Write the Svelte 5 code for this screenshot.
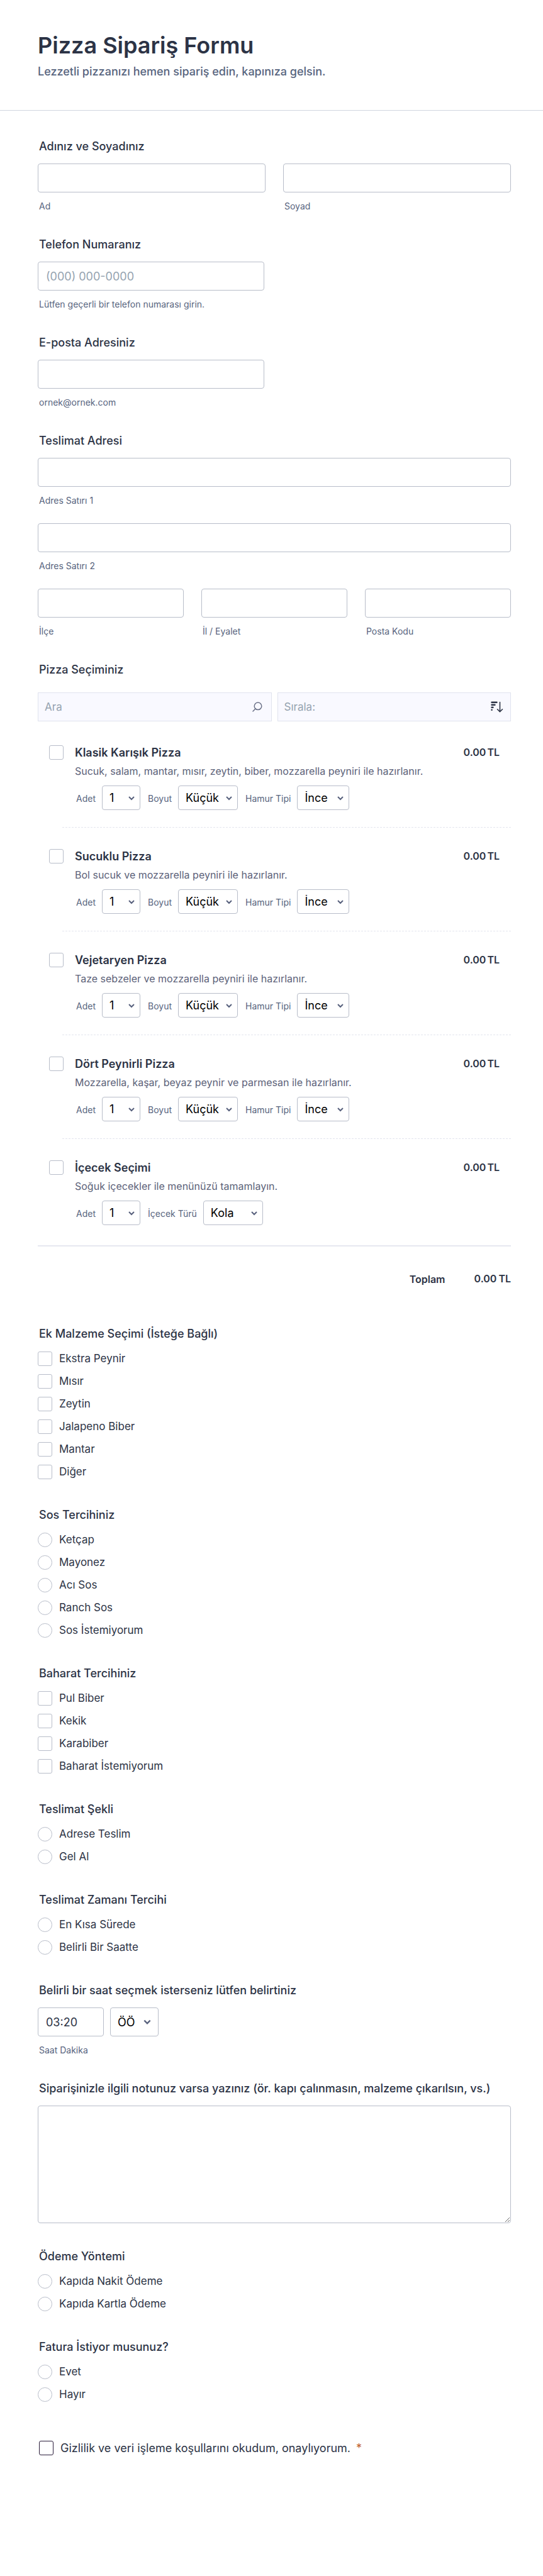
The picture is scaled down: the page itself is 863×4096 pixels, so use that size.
<script lang="ts">
	type Field = { label: string; options: string[]; width: 'narrow' | 'medium' | 'wide' };

	const quantity: Field = { label: 'Adet', options: ['1', '2', '3', '4', '5'], width: 'narrow' };
	const size: Field = { label: 'Boyut', options: ['Küçük', 'Orta', 'Büyük'], width: 'wide' };
	const dough: Field = { label: 'Hamur Tipi', options: ['İnce', 'Kalın'], width: 'medium' };
	const drink: Field = { label: 'İçecek Türü', options: ['Kola', 'Ayran', 'Su'], width: 'wide' };

	const products = [
		{ name: 'Klasik Karışık Pizza', text: 'Sucuk, salam, mantar, mısır, zeytin, biber, mozzarella peyniri ile hazırlanır.', fields: [quantity, size, dough] },
		{ name: 'Sucuklu Pizza', text: 'Bol sucuk ve mozzarella peyniri ile hazırlanır.', fields: [quantity, size, dough] },
		{ name: 'Vejetaryen Pizza', text: 'Taze sebzeler ve mozzarella peyniri ile hazırlanır.', fields: [quantity, size, dough] },
		{ name: 'Dört Peynirli Pizza', text: 'Mozzarella, kaşar, beyaz peynir ve parmesan ile hazırlanır.', fields: [quantity, size, dough] },
		{ name: 'İçecek Seçimi', text: 'Soğuk içecekler ile menünüzü tamamlayın.', fields: [quantity, drink] }
	];

	const choices = [
		{ id: 'extra', type: 'checkbox', title: 'Ek Malzeme Seçimi (İsteğe Bağlı)', items: ['Ekstra Peynir', 'Mısır', 'Zeytin', 'Jalapeno Biber', 'Mantar', 'Diğer'] },
		{ id: 'sauce', type: 'radio', title: 'Sos Tercihiniz', items: ['Ketçap', 'Mayonez', 'Acı Sos', 'Ranch Sos', 'Sos İstemiyorum'] },
		{ id: 'spice', type: 'checkbox', title: 'Baharat Tercihiniz', items: ['Pul Biber', 'Kekik', 'Karabiber', 'Baharat İstemiyorum'] },
		{ id: 'delivery', type: 'radio', title: 'Teslimat Şekli', items: ['Adrese Teslim', 'Gel Al'] },
		{ id: 'when', type: 'radio', title: 'Teslimat Zamanı Tercihi', items: ['En Kısa Sürede', 'Belirli Bir Saatte'] }
	];

	const payment = [
		{ id: 'payment', type: 'radio', title: 'Ödeme Yöntemi', items: ['Kapıda Nakit Ödeme', 'Kapıda Kartla Ödeme'] },
		{ id: 'invoice', type: 'radio', title: 'Fatura İstiyor musunuz?', items: ['Evet', 'Hayır'] }
	];
</script>

{#snippet textField(id: string, sub: string, type = 'text', placeholder = '')}
	<div class="field">
		<input class="box" {id} name={id} {type} {placeholder} />
		<label class="sub" for={id}>{sub}</label>
	</div>
{/snippet}

{#snippet chevron()}
	<svg class="chevron" viewBox="0 0 12 12" aria-hidden="true"><path d="M2 4 L6 8 L10 4" /></svg>
{/snippet}

{#snippet choiceGroup(group: { id: string; type: string; title: string; items: string[] })}
	<fieldset class="section">
		<legend class="title">{group.title}</legend>
		<div class="options">
			{#each group.items as item}
				<label class="option">
					<input class="tick" type={group.type} name={group.id} value={item} />
					<span>{item}</span>
				</label>
			{/each}
		</div>
	</fieldset>
{/snippet}

<form class="page">
	<header class="header">
		<h1>Pizza Sipariş Formu</h1>
		<p>Lezzetli pizzanızı hemen sipariş edin, kapınıza gelsin.</p>
	</header>

	<main class="body">
		<fieldset class="section">
			<legend class="title">Adınız ve Soyadınız</legend>
			<div class="cols two">
				{@render textField('first', 'Ad')}
				{@render textField('last', 'Soyad')}
			</div>
		</fieldset>

		<fieldset class="section half">
			<legend class="title">Telefon Numaranız</legend>
			{@render textField('phone', 'Lütfen geçerli bir telefon numarası girin.', 'tel', '(000) 000-0000')}
		</fieldset>

		<fieldset class="section half">
			<legend class="title">E-posta Adresiniz</legend>
			{@render textField('email', 'ornek@ornek.com', 'email')}
		</fieldset>

		<fieldset class="section">
			<legend class="title">Teslimat Adresi</legend>
			<div class="stack">
				{@render textField('addr1', 'Adres Satırı 1')}
				{@render textField('addr2', 'Adres Satırı 2')}
				<div class="cols three">
					{@render textField('district', 'İlçe')}
					{@render textField('city', 'İl / Eyalet')}
					{@render textField('postal', 'Posta Kodu')}
				</div>
			</div>
		</fieldset>

		<fieldset class="section">
			<legend class="title">Pizza Seçiminiz</legend>
			<div class="filters">
				<div class="filter">
					<input type="text" placeholder="Ara" aria-label="Ara" />
					<svg class="search" viewBox="0 0 16 16" aria-hidden="true"><circle cx="9" cy="6.8" r="5.8" /><path d="M4.9 10.9 L1 15" /></svg>
				</div>
				<div class="filter sorting">
					<button type="button">Sırala:</button>
					<svg class="sort" viewBox="0 0 20 18" aria-hidden="true">
						<path d="M1.5 1.7h8M1.5 5.8h5M1.5 9.8h2M1.5 13.8h0.2" stroke-width="2.4" />
						<path d="M14.5 1.5v15M10.5 12.8l4 4 4-4" stroke-width="1.6" />
					</svg>
				</div>
			</div>

			<ul class="products">
				{#each products as product, i}
					<li class="product">
						<input class="tick" type="checkbox" id="product-{i}" />
						<div class="details">
							<div class="row">
								<label class="name" for="product-{i}">{product.name}</label>
								<span class="price"><span>0.00</span><span>TL</span></span>
							</div>
							<p class="text">{product.text}</p>
							<div class="selects">
								{#each product.fields as field, j}
									<label class="sub" for="product-{i}-{j}">{field.label}</label>
									<span class="select {field.width}">
										<select id="product-{i}-{j}">
											{#each field.options as option}
												<option>{option}</option>
											{/each}
										</select>
										{@render chevron()}
									</span>
								{/each}
							</div>
						</div>
					</li>
				{/each}
			</ul>
			<div class="total">
				<span>Toplam</span>
				<span class="price"><span>0.00</span><span>TL</span></span>
			</div>
		</fieldset>

		{#each choices as group}
			{@render choiceGroup(group)}
		{/each}

		<fieldset class="section">
			<legend class="title">Belirli bir saat seçmek isterseniz lütfen belirtiniz</legend>
			<div class="time">
				<input class="box" id="time" type="text" value="03:20" />
				<span class="select tall">
					<select aria-label="ÖÖ / ÖS">
						<option>ÖÖ</option>
						<option>ÖS</option>
					</select>
					{@render chevron()}
				</span>
			</div>
			<label class="sub" for="time">Saat Dakika</label>
		</fieldset>

		<div class="section note">
			<label class="title" for="note">Siparişinizle ilgili notunuz varsa yazınız (ör. kapı çalınmasın, malzeme çıkarılsın, vs.)</label>
			<textarea class="box" id="note"></textarea>
		</div>

		{#each payment as group}
			{@render choiceGroup(group)}
		{/each}

		<label class="option terms">
			<input class="tick" type="checkbox" required />
			<span>Gizlilik ve veri işleme koşullarını okudum, onaylıyorum. <span class="required">*</span></span>
		</label>
	</main>
</form>

<style>
	:global(body) { background: #fff; }

	* { box-sizing: border-box; }

	.page { font-family: Inter, 'Liberation Sans', sans-serif; font-size: 16px; color: #2c3345; }

	.header { padding: 48px 60px; border-bottom: 1px solid #d0d5e0; }
	.header h1 { margin: 0; font-size: 36px; line-height: 48px; font-weight: 600; }
	.header p { margin: 4px 0 0; font-size: 18px; line-height: 27px; font-weight: 500; color: #57647e; }

	.body { padding: 45px 51px 0 60px; }

	.section { min-width: 0; margin: 0 0 39px; padding: 0; border: 0; }
	.title { display: block; margin: 0 0 15px; padding: 0 2px; font-size: 18px; line-height: 24px; font-weight: 500; }

	.field { display: flex; flex-direction: column; min-width: 0; }
	.box {
		display: block; width: 100%; height: 46px; margin: 0; padding: 0 12px; background: #fff;
		border: 1px solid #b8bdc9; border-radius: 4px; color: #2c3345; font: inherit; font-size: 18px;
	}
	.box::placeholder { color: #95a3b0; opacity: 1; }
	.sub { display: block; margin-top: 11px; padding-left: 2px; font-size: 14px; line-height: 21px; color: #57647e; }
	.half .field { max-width: 360px; }

	.cols { display: grid; gap: 28px; }
	.two { grid-template-columns: 1fr 1fr; }
	.three { grid-template-columns: 1fr 1fr 1fr; }
	.stack { display: flex; flex-direction: column; gap: 26px; }

	.filters { display: grid; grid-template-columns: 1fr 1fr; gap: 9px; padding-top: 9px; }
	.filter {
		display: flex; align-items: center; height: 46px; padding: 0 14px 0 10px;
		background: #f9f9ff; border: 1px solid #e0e3ee;
	}
	.sorting { padding-right: 11px; }
	.filter input, .filter button {
		flex: 1; min-width: 0; padding: 0; border: 0; background: none; font: inherit; font-size: 17px;
		color: #95a3b0; text-align: left;
	}
	.filter input::placeholder { color: #95a3b0; opacity: 1; }
	.search, .sort { fill: none; stroke-linecap: round; stroke-linejoin: round; }
	.search { width: 16px; height: 16px; stroke: #6b7187; stroke-width: 1.5; }
	.sort { width: 20px; height: 18px; stroke: #2c3345; }

	.products { margin: 0; padding: 3px 0 5px; list-style: none; border-bottom: 2px solid #e6e8f0; }
	.product { position: relative; display: flex; gap: 18px; padding: 35px 18px 27px; }
	.product + .product::before { content: ''; position: absolute; top: 0; left: 39px; right: 0; border-top: 1px dashed #e3e5ee; }
	.details { flex: 1; min-width: 0; }
	.row { display: flex; justify-content: space-between; }
	.name { font-size: 18px; line-height: 24px; font-weight: 600; }
	.price { display: flex; gap: 2px; font-size: 16px; line-height: 22px; font-weight: 600; }
	.text { margin: 5px 0 0; font-size: 16px; line-height: 24px; color: #5c6279; }
	.selects { display: flex; gap: 10px; margin-top: 11px; }
	.selects .sub { margin: 0; line-height: 42px; height: 39px; }

	.select { position: relative; height: 39px; }
	.select select {
		width: 100%; height: 100%; padding: 0 11px; appearance: none; background: #fff;
		border: 1px solid #b8bdc9; border-radius: 4px; color: #000; font: inherit; font-size: 18px;
	}
	.chevron {
		position: absolute; right: 8px; top: 50%; width: 12px; height: 12px; margin-top: -6px;
		fill: none; stroke: #57607c; stroke-width: 2; pointer-events: none;
	}
	.narrow { width: 61px; }
	.medium { width: 83px; }
	.wide { width: 95px; }
	.tall { width: 77px; height: 46px; }
	.tall .chevron { right: 11px; width: 14px; height: 14px; margin-top: -7px; }

	.total { display: flex; justify-content: flex-end; gap: 46px; padding: 40px 0 24px; font-weight: 600; line-height: 24px; }
	.total .price { gap: 3px; }

	.options { display: flex; flex-direction: column; gap: 13px; padding: 1px 0 6px; }
	.option { display: flex; align-items: center; gap: 11px; font-size: 17px; line-height: 23px; }
	.tick {
		flex: none; width: 23px; height: 23px; margin: 0; appearance: none; background: #fff;
		border: 1px solid #b8bdc9; border-radius: 3px;
	}
	.tick[type='radio'] { border-radius: 50%; }

	.time { display: flex; gap: 10px; }
	.time .box { width: 105px; }
	.note { margin-bottom: 41px; }
	textarea.box { height: 187px; padding: 12px; resize: vertical; }

	.terms { margin-top: 56px; padding: 0 2px 192px; font-size: 18px; }
	.terms .tick { border-color: #2c1f3c; }
	.required { margin-left: 4px; color: #c0622f; }
</style>
